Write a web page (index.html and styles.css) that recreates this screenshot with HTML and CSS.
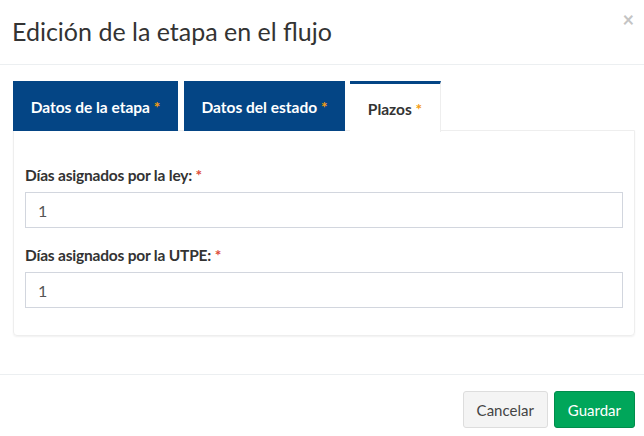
FILE: index.html
```html
<!DOCTYPE html>
<html lang="es">
<head>
<meta charset="utf-8">
<link rel="stylesheet" href="styles.css">
</head>
<body>
<div class="modal">
  <div class="modal-header">
    <h4 class="modal-title">Edición de la etapa en el flujo</h4>
    <span class="close">×</span>
  </div>
  <div class="modal-body">
    <ul class="tabs">
      <li class="tab"><span>Datos de la etapa <span class="star">*</span></span></li>
      <li class="tab"><span>Datos del estado <span class="star">*</span></span></li>
      <li class="tab active"><span>Plazos <span class="star">*</span></span></li>
    </ul>
    <div class="panel">
      <div class="form-group">
        <label class="label">Días asignados por la ley: <span class="req">*</span></label>
        <div class="input">1</div>
      </div>
      <div class="form-group">
        <label class="label">Días asignados por la UTPE: <span class="req">*</span></label>
        <div class="input">1</div>
      </div>
    </div>
  </div>
  <div class="modal-footer">
    <button class="btn btn-default">Cancelar</button>
    <button class="btn btn-success">Guardar</button>
  </div>
</div>
</body>
</html>
```
FILE: styles.css
```css
* { box-sizing: border-box; }
html, body { margin: 0; padding: 0; background: #fff; }
body {
  font-family: "Lato", "Liberation Sans", sans-serif;
  color: #333;
  width: 644px;
  height: 436px;
  overflow: hidden;
}
.modal-header {
  position: relative;
  height: 65px;
  padding: 0 12px 3px;
  border-bottom: 1px solid #eceff1;
  display: flex;
  align-items: center;
}
.modal-title {
  margin: 0;
  font-size: 25px;
  font-weight: 400;
  color: #333;
}
.close {
  position: absolute;
  right: 10px;
  top: 9px;
  font-size: 20px;
  font-weight: 700;
  color: #c4c4c4;
  line-height: 20px;
}
.modal-body {
  padding: 16px 9px 38px 13px;
}
.tabs {
  list-style: none;
  margin: 0;
  padding: 0;
  display: flex;
  height: 50px;
}
.tab {
  height: 50px;
  display: flex;
  align-items: center;
  justify-content: center;
  background: #044585;
  color: #fff;
  font-weight: 700;
  font-size: 15.5px;
  margin-right: 6px;
  white-space: pre;
  padding-top: 2px;
}
.tab:nth-child(1) { width: 165px; }
.tab:nth-child(2) { width: 161px; margin-right: 5px; }
.tab.active {
  width: 91px;
  background: #fff;
  color: #333;
  border-top: 3px solid #044585;
  border-right: 1px solid #eeeeee;
  padding-top: 2px;
  position: relative;
  z-index: 1;
  height: 51px;
}
.star { color: #f39c12; }
.panel {
  margin-top: -1px;
  border: 1px solid #eeeeee;
  border-radius: 0 0 4px 4px;
  box-shadow: 0 1px 2px rgba(0,0,0,0.06);
  padding: 34px 11px 27px 11px;
}
.form-group + .form-group { margin-top: 17px; }
.label {
  display: block;
  font-weight: 700;
  font-size: 15.5px;
  line-height: 20px;
  color: #333;
  margin-bottom: 7px;
  letter-spacing: -0.2px;
}
.req { color: #dd4b39; }
.input {
  height: 36px;
  border: 1px solid #d2d6de;
  padding: 0 12px;
  display: flex;
  align-items: center;
  font-size: 16px;
  color: #555;
}
.modal-footer {
  border-top: 1px solid #eceff1;
  padding: 16px 9px 0 0;
  display: flex;
  justify-content: flex-end;
  gap: 6px;
}
.btn {
  font-family: inherit;
  font-size: 15px;
  height: 37px;
  border-radius: 3px;
  padding: 0 13px;
  border: 1px solid transparent;
}
.btn-default {
  background: #f4f4f4;
  border-color: #ddd;
  color: #444;
}
.btn-success {
  background: #00a65a;
  border-color: #008d4c;
  color: #fff;
}
```
